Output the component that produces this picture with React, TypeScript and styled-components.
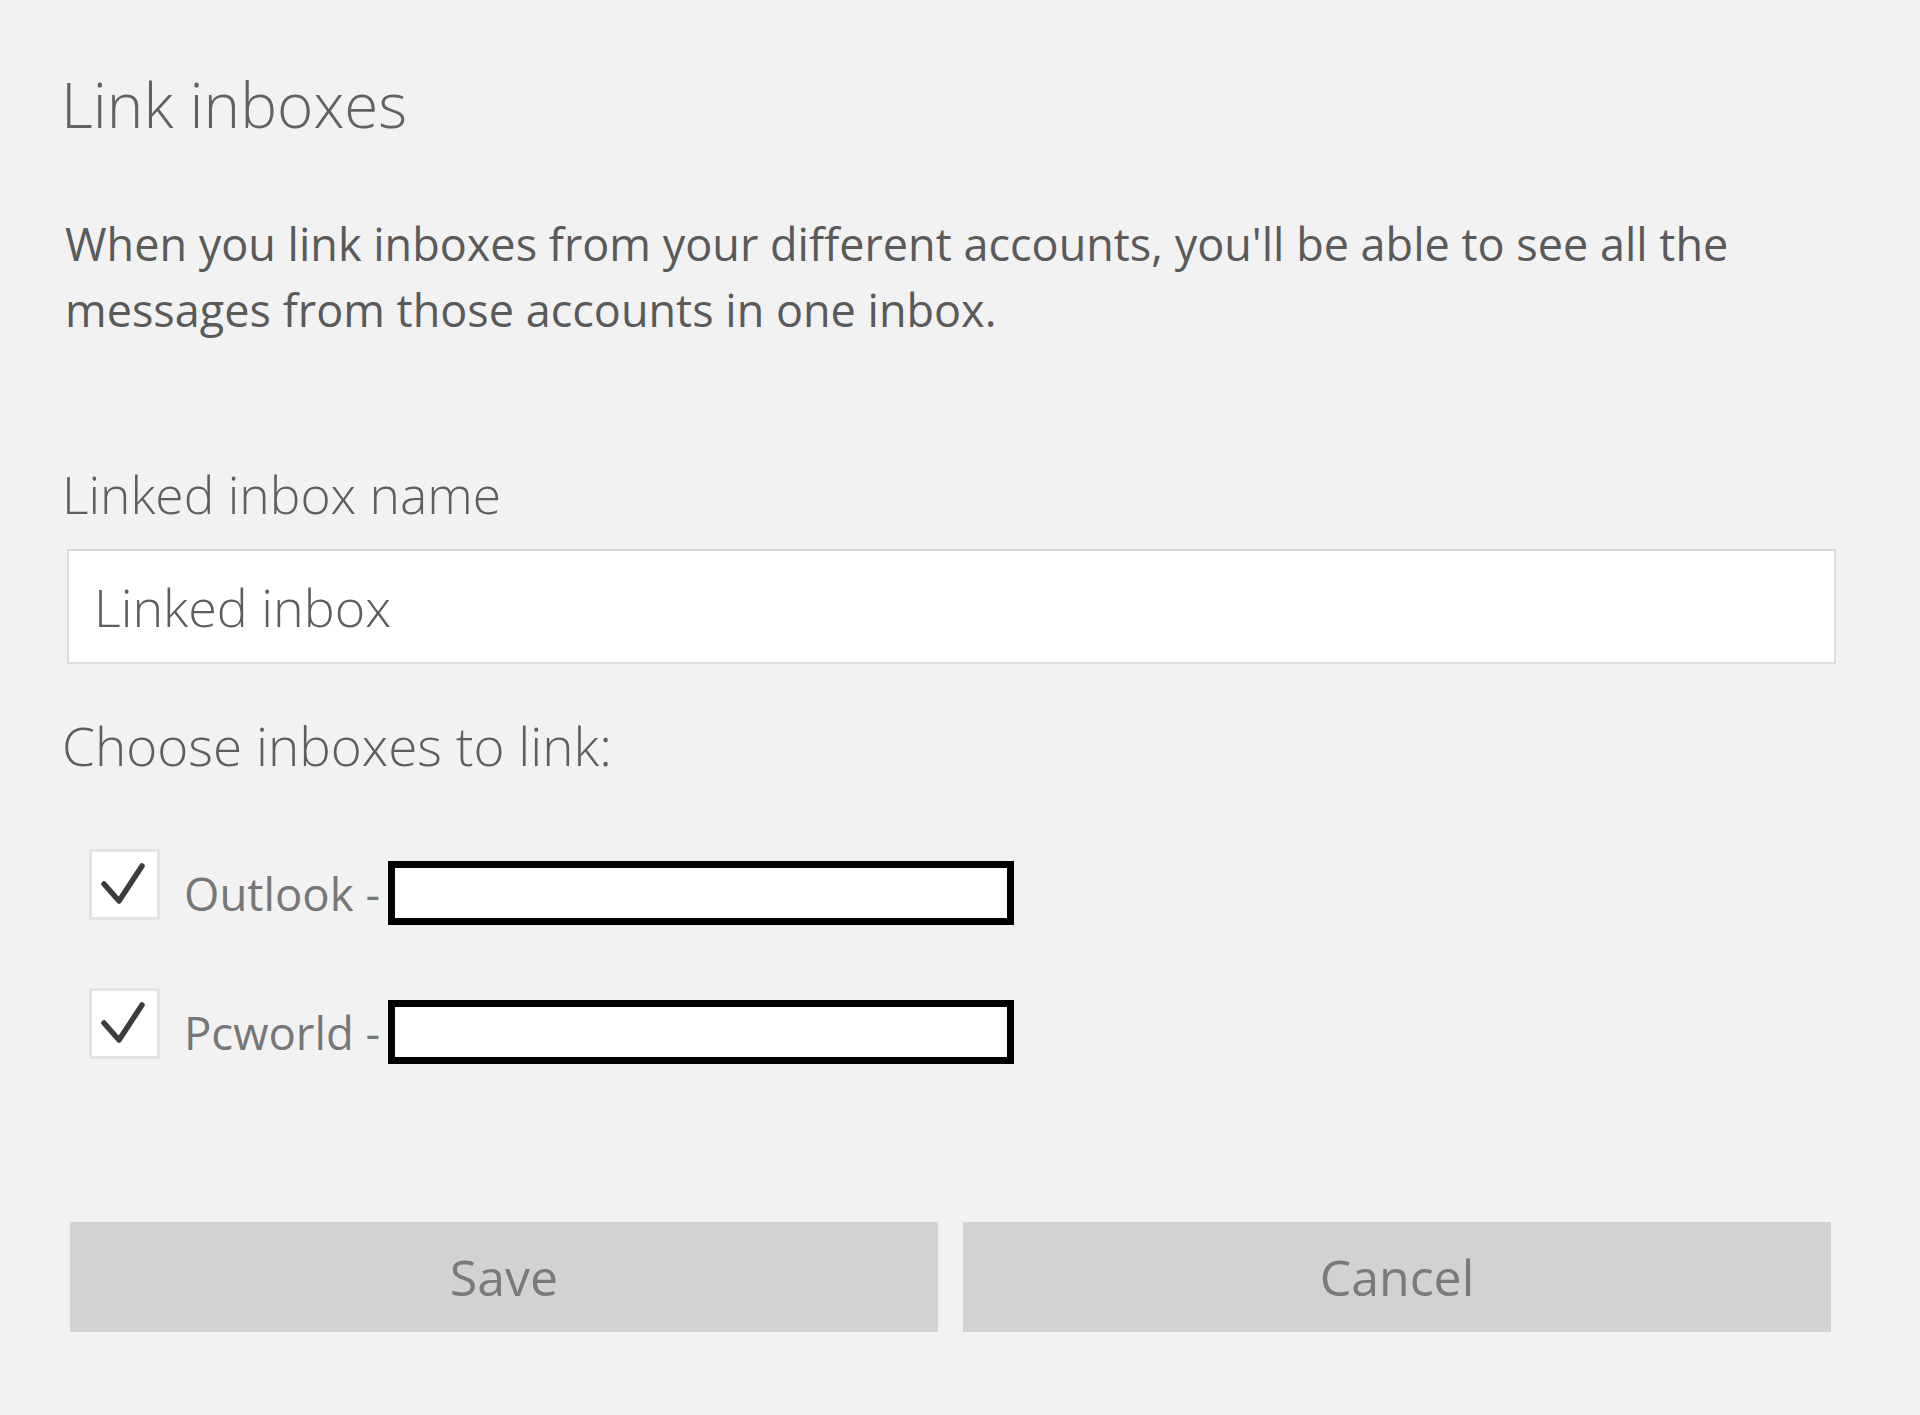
import React from "react";
import styled, { createGlobalStyle } from "styled-components";

const GlobalStyle = createGlobalStyle`
  html, body {
    margin: 0;
    background: #f2f2f2;
  }
  body {
    font-family: "Open Sans", "Noto Sans", sans-serif;
    color: #666;
  }
  * {
    box-sizing: border-box;
  }
`;

const Page = styled.div`
  min-height: 1415px;
  padding: 64px 0 0 60px;
  display: flex;
  flex-direction: column;
  align-items: flex-start;
`;

const Title = styled.h1`
  margin: 0 0 0 1px;
  font-size: 62px;
  font-weight: 300;
  line-height: 80px;
  color: #626262;
`;

const Description = styled.p`
  margin: 67px 0 0 5px;
  max-width: 1700px;
  font-size: 45px;
  font-weight: 400;
  line-height: 66px;
  color: #5a5a5a;
`;

const FieldLabel = styled.div<{ $top: number; $size?: number }>`
  margin: ${(p) => p.$top}px 0 0 2px;
  font-size: ${(p) => p.$size ?? 51.5}px;
  font-weight: 300;
  line-height: 60px;
  color: #5e5e5e;
`;

const TextBox = styled.div`
  margin: 25px 0 0 7px;
  width: 1769px;
  height: 115px;
  padding-left: 25px;
  display: flex;
  align-items: center;
  background: #fff;
  border: 2px solid #dcdcdc;
  border-top-color: #d6d6d6;
  font-size: 52px;
  font-weight: 300;
  line-height: 60px;
  color: #5e5e5e;
`;

const AccountList = styled.div`
  margin: 73px 0 0 29px;
  width: 925px;
  display: flex;
  flex-direction: column;
  gap: 51px;
`;

const AccountRow = styled.div`
  height: 88px;
  display: flex;
  align-items: center;
`;

const CheckBox = styled.div`
  width: 71px;
  height: 71px;
  margin-bottom: 18px;
  flex-shrink: 0;
  background: #fff;
  border: 3px solid #e3e3e3;

  svg {
    display: block;
    width: 100%;
    height: 100%;
  }
`;

const AccountName = styled.span`
  margin-left: 24px;
  font-size: 45.5px;
  font-weight: 400;
  color: #777;
  white-space: pre;
`;

const Redacted = styled.div`
  margin-left: 8px;
  flex: 1;
  height: 64px;
  background: #fff;
  border: 7px solid #000;
`;

const ButtonRow = styled.div`
  margin: 146px 0 0 10px;
  width: 1761px;
  display: grid;
  grid-template-columns: 1fr 1fr;
  gap: 25px;
`;

const Button = styled.button`
  height: 110px;
  border: none;
  background: #d2d2d2;
  font-family: "Open Sans", "Noto Sans", sans-serif;
  font-size: 50px;
  font-weight: 400;
  color: #7a7a7a;
  cursor: pointer;
`;

const CheckIcon = () => (
  <svg viewBox="0 0 65 65">
    <polyline
      points="12,32 27,49 50,14"
      fill="none"
      stroke="#3c3c3c"
      strokeWidth="5.5"
      strokeLinecap="round"
      strokeLinejoin="round"
    />
  </svg>
);

const accounts = ["Outlook", "Pcworld"];

export default function App() {
  return (
    <Page>
      <GlobalStyle />
      <Title>Link inboxes</Title>
      <Description>
        When you link inboxes from your different accounts, you'll be able to see all the
        messages from those accounts in one inbox.
      </Description>
      <FieldLabel $top={121}>Linked inbox name</FieldLabel>
      <TextBox>Linked inbox</TextBox>
      <FieldLabel $top={52} $size={53}>
        Choose inboxes to link:
      </FieldLabel>
      <AccountList>
        {accounts.map((name) => (
          <AccountRow key={name}>
            <CheckBox>
              <CheckIcon />
            </CheckBox>
            <AccountName>{name} -</AccountName>
            <Redacted />
          </AccountRow>
        ))}
      </AccountList>
      <ButtonRow>
        <Button>Save</Button>
        <Button>Cancel</Button>
      </ButtonRow>
    </Page>
  );
}
